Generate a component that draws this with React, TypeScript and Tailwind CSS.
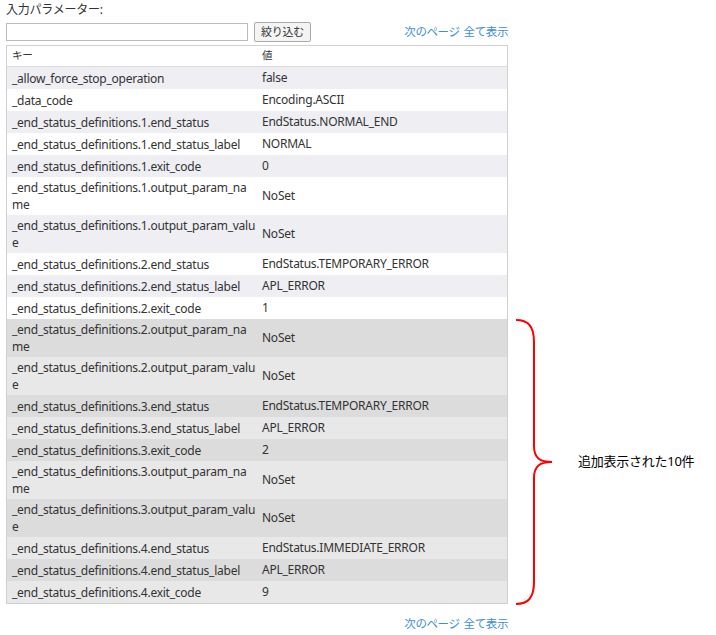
const rows: [string, string][] = [
  ["_allow_force_stop_operation", "false"],
  ["_data_code", "Encoding.ASCII"],
  ["_end_status_definitions.1.end_status", "EndStatus.NORMAL_END"],
  ["_end_status_definitions.1.end_status_label", "NORMAL"],
  ["_end_status_definitions.1.exit_code", "0"],
  ["_end_status_definitions.1.output_param_name", "NoSet"],
  ["_end_status_definitions.1.output_param_value", "NoSet"],
  ["_end_status_definitions.2.end_status", "EndStatus.TEMPORARY_ERROR"],
  ["_end_status_definitions.2.end_status_label", "APL_ERROR"],
  ["_end_status_definitions.2.exit_code", "1"],
  ["_end_status_definitions.2.output_param_name", "NoSet"],
  ["_end_status_definitions.2.output_param_value", "NoSet"],
  ["_end_status_definitions.3.end_status", "EndStatus.TEMPORARY_ERROR"],
  ["_end_status_definitions.3.end_status_label", "APL_ERROR"],
  ["_end_status_definitions.3.exit_code", "2"],
  ["_end_status_definitions.3.output_param_name", "NoSet"],
  ["_end_status_definitions.3.output_param_value", "NoSet"],
  ["_end_status_definitions.4.end_status", "EndStatus.IMMEDIATE_ERROR"],
  ["_end_status_definitions.4.end_status_label", "APL_ERROR"],
  ["_end_status_definitions.4.exit_code", "9"],
];

function rowBg(i: number) {
  if (i < 10) return i % 2 === 0 ? "bg-[#eeeef3]" : "bg-white";
  return i % 2 === 0 ? "bg-[#dcdcdc]" : "bg-[#e8e8e8]";
}

function Links() {
  return (
    <div className="flex gap-1 text-[11.5px] tracking-[-0.4px] text-[#3b8fd6]">
      <span>次のページ</span>
      <span>全て表示</span>
    </div>
  );
}

export default function App() {
  return (
    <div
      className="relative w-[716px] h-[635px] bg-white text-[12px] tracking-[-0.25px] text-[#333]"
      style={{ fontFamily: '"Noto Sans", "Noto Sans CJK JP", sans-serif' }}
    >
      <div className="w-[508px] pl-[6px] pt-[1px]">
        <div className="h-[18px] leading-[18px]">入力パラメーター:</div>
        <div className="flex items-center h-[24px] mt-[1px]">
          <input className="w-[242px] h-[18px] border border-[#bbb]" />
          <button className="ml-[6px] h-[20px] px-[6px] border border-[#aaa] rounded-[2px] bg-[#f4f4f4] text-[11px] leading-[18px]">
            絞り込む
          </button>
          <div className="ml-auto">
            <Links />
          </div>
        </div>
        <div className="mt-[1px] border border-[#d0d0d0]">
          <div className="flex h-[21px] items-center bg-white border-b border-[#ddd] text-[10.5px]">
            <div className="w-[250px] pl-[5px]">キー</div>
            <div className="pl-[5px]">値</div>
          </div>
          {rows.map(([k, v], i) => (
            <div key={i} className={`flex items-center min-h-[22px] ${rowBg(i)}`}>
              <div className="w-[250px] pl-[5px] pr-[1px] py-[2px] break-all leading-[17px]">{k}</div>
              <div className="pl-[5px]">{v}</div>
            </div>
          ))}
        </div>
        <div className="flex justify-end mt-[11px]">
          <Links />
        </div>
      </div>
      <svg className="absolute left-[514px] top-[318px]" width="50" height="290" viewBox="0 0 50 290">
        <path
          d="M2 2 C14 2 20 8 20 24 L20 128 C20 140 26 144 38 144 C26 144 20 148 20 160 L20 264 C20 280 14 286 2 286"
          fill="none"
          stroke="#ff0000"
          strokeWidth="2"
        />
      </svg>
      <div className="absolute left-[578px] top-[452px] text-[13px] text-black">追加表示された10件</div>
    </div>
  );
}
